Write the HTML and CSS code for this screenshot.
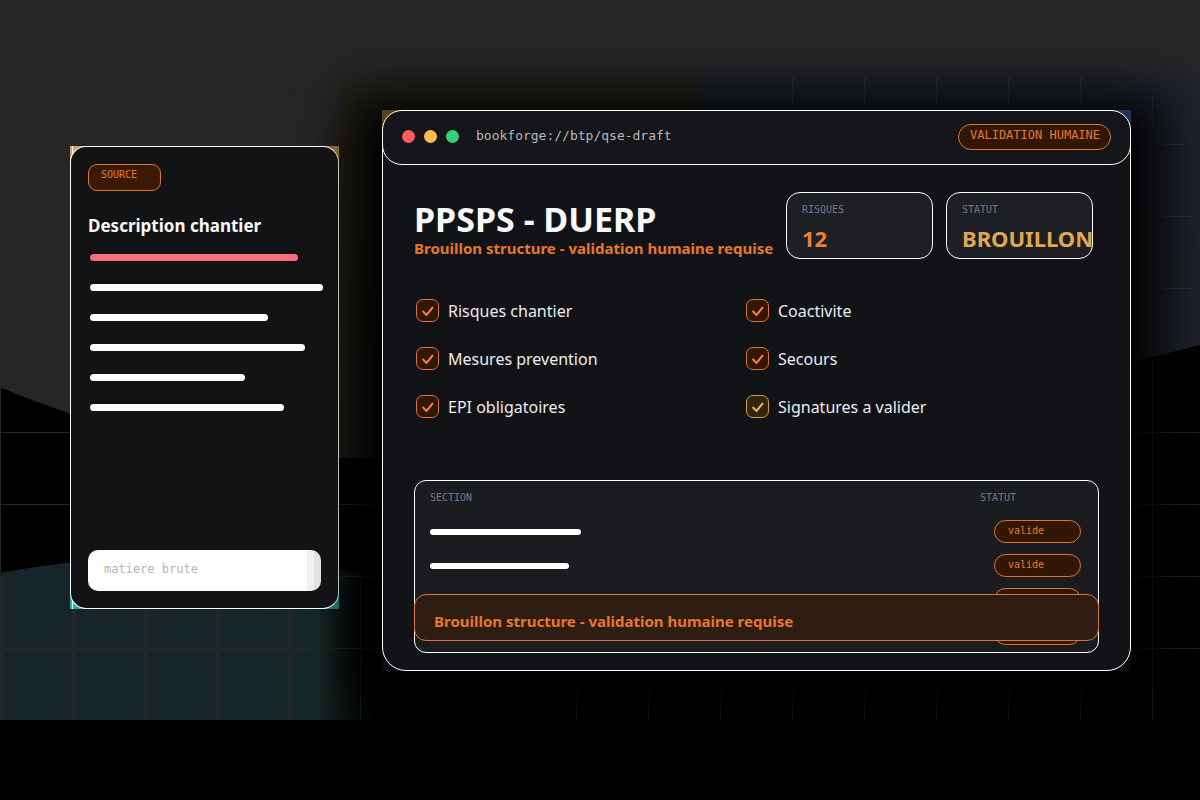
FILE: index.html
```
<!DOCTYPE html>
<html lang="fr">

<head>
  <meta charset="UTF-8">
  <title>PPSPS - DUERP</title>
  <link rel="stylesheet" href="styles.css">
</head>

<body>
  <main class="stage">
    <svg class="backdrop" viewBox="0 0 1200 720" preserveAspectRatio="xMidYMid slice" aria-hidden="true">
      <defs>
        <linearGradient id="teal">
          <stop offset="0" stop-color="#182528" />
          <stop offset=".7" stop-color="#182528" />
          <stop offset=".85" stop-color="#182a28" />
          <stop offset="1" stop-color="#182a28" stop-opacity="0" />
        </linearGradient>
        <linearGradient id="blue" x2="0" y2="1">
          <stop offset="0" stop-color="#1e2430" stop-opacity="0" />
          <stop offset=".12" stop-color="#1e2430" />
          <stop offset="1" stop-color="#20242c" />
        </linearGradient>
        <linearGradient id="brown" x2="0" y2="1">
          <stop offset="0" stop-color="#28241a" stop-opacity="0" />
          <stop offset=".12" stop-color="#28241a" />
          <stop offset="1" stop-color="#241e18" />
        </linearGradient>
        <clipPath id="top">
          <circle cx="350" cy="-442" r="900" />
        </clipPath>
        <clipPath id="right">
          <circle cx="950" cy="-520" r="900" />
        </clipPath>
      </defs>
      <path class="grid" d="M0 432.5H1200M0 504.5H1200M0 576.5H1200M0 648.5H1200M.5 360V720M360.5 576V720M576.5 576V720M648.5 576V720M720.5 576V720M792.5 576V720M864.5 576V720M936.5 576V720M1008.5 576V720M1080.5 576V720M1152.5 360V720" />
      <circle class="halo" cx="350" cy="-442" r="900" />
      <circle class="halo" cx="950" cy="-520" r="900" />
      <rect x="340" y="60" width="360" height="400" fill="url(#brown)" clip-path="url(#top)" />
      <rect x="700" y="60" width="500" height="330" fill="url(#blue)" clip-path="url(#right)" />
      <path class="grid-faint" d="M792.5 76V120M864.5 76V120M936.500 76V120M1008.5 76V120M1080.5 76V120M1152.5 96V130M1160 144.5H1184M1160 216.5H1192M1160 288.5H1192" />
      <path d="M0 573Q170 540 375 576V720H0Z" fill="url(#teal)" />
      <path class="grid-teal" d="M2 576V720M74 576V720M146 576V720M218 576V720M290 576V720M0 650H320" />
    </svg>

    <section class="frame source-frame">
      <div class="source">
        <span class="tag">SOURCE</span>
        <h2>Description chantier</h2>
        <div class="lines">
          <i class="line l1"></i>
          <i class="line l2"></i>
          <i class="line l3"></i>
          <i class="line l4"></i>
          <i class="line l5"></i>
          <i class="line l6"></i>
        </div>
        <input class="raw" type="text" placeholder="matiere brute" aria-label="matiere brute">
      </div>
    </section>

    <section class="frame app-frame">
      <div class="app">
        <header class="bar">
          <i class="dot red"></i>
          <i class="dot yellow"></i>
          <i class="dot green"></i>
          <span class="url">bookforge://btp/qse-draft</span>
          <span class="pill human">VALIDATION HUMAINE</span>
        </header>

        <div class="content">
          <div class="top">
            <div class="heading">
              <h1>PPSPS - DUERP</h1>
              <p class="notice">Brouillon structure - validation humaine requise</p>
            </div>
            <div class="stat">
              <span class="label">RISQUES</span>
              <strong>12</strong>
            </div>
            <div class="stat gold">
              <span class="label">STATUT</span>
              <strong>BROUILLON</strong>
            </div>
          </div>

          <div class="checks">
            <label class="check"><span class="box"><input type="checkbox" checked><svg viewBox="0 0 23 23"><path d="M6.500 12L10.500 16L17 8" /></svg></span>Risques chantier</label>
            <label class="check"><span class="box"><input type="checkbox" checked><svg viewBox="0 0 23 23"><path d="M6.500 12L10.500 16L17 8" /></svg></span>Coactivite</label>
            <label class="check"><span class="box"><input type="checkbox" checked><svg viewBox="0 0 23 23"><path d="M6.500 12L10.500 16L17 8" /></svg></span>Mesures prevention</label>
            <label class="check"><span class="box"><input type="checkbox" checked><svg viewBox="0 0 23 23"><path d="M6.500 12L10.500 16L17 8" /></svg></span>Secours</label>
            <label class="check"><span class="box"><input type="checkbox" checked><svg viewBox="0 0 23 23"><path d="M6.500 12L10.500 16L17 8" /></svg></span>EPI obligatoires</label>
            <label class="check gold"><span class="box"><input type="checkbox" checked><svg viewBox="0 0 23 23"><path d="M6.500 12L10.500 16L17 8" /></svg></span>Signatures a valider</label>
          </div>

          <div class="panel">
            <table>
              <thead>
                <tr>
                  <th>SECTION</th>
                  <th class="status">STATUT</th>
                </tr>
              </thead>
              <tbody>
                <tr>
                  <td><i class="line s1"></i></td>
                  <td class="status"><span class="pill">valide</span></td>
                </tr>
                <tr>
                  <td><i class="line s2"></i></td>
                  <td class="status"><span class="pill">valide</span></td>
                </tr>
                <tr>
                  <td></td>
                  <td class="status"><span class="pill"></span></td>
                </tr>
                <tr>
                  <td></td>
                  <td class="status"><span class="pill"></span></td>
                </tr>
              </tbody>
            </table>
            <p class="notice banner">Brouillon structure - validation humaine requise</p>
          </div>
        </div>
      </div>
    </section>
  </main>
</body>

</html>
```
FILE: styles.css
```
* {
  box-sizing: border-box;
}
body {
  margin: 0;
  background: #000;
  color: #f8f8f9;
  font-family: "Noto Sans", "Open Sans", sans-serif;
}
h1, h2, p {
  margin: 0;
}
.stage {
  position: relative;
  display: grid;
  grid-template-columns: 269fr 749fr;
  gap: 43px;
  align-items: start;
  min-height: 720px;
  padding: 110px 69px 49px 70px;
  overflow: hidden;
}

/* backdrop */
.backdrop {
  position: absolute;
  top: 0;
  left: 0;
  width: 100%;
  height: 100%;
}
.grid {
  fill: none;
  stroke: #262626;
}
.grid-faint {
  fill: none;
  stroke: #30333a;
}
.halo {
  fill: #262628;
}
.grid-teal {
  fill: none;
  stroke: #202829;
  stroke-width: 4;
}

/* panels */
.frame {
  position: relative;
  min-width: 0;
}
.source-frame {
  z-index: 1;
  margin-top: 36px;
  background:
    linear-gradient(#fff, #fff) 2px 0 / 1px 100% no-repeat,
    linear-gradient(90deg, transparent 50%, rgba(0, 0, 0, 0.4)),
    linear-gradient(#dca552 50%, #20b4a4 50%);
}
.app-frame {
  background:
    linear-gradient(transparent 50%, #080c0e 50%),
    linear-gradient(90deg, #5a4018 50%, #1f3352 50%);
  box-shadow: 0 18px 50px 32px #000;
}
.source {
  display: flex;
  flex-direction: column;
  align-items: flex-start;
  min-height: 463px;
  padding: 17px;
  background: #121315;
  border: 1px solid #fff;
  border-right-color: #bdbdb8;
  border-radius: 16px;
}
.tag {
  width: 73px;
  height: 27px;
  padding-left: 12px;
  border: 1px solid #d9773a;
  border-radius: 9px;
  background: #3a1a05;
  color: #e37a30;
  font: 10px/20px "DejaVu Sans Mono", monospace;
}
h2 {
  margin-top: 22px;
  font-size: 17px;
  line-height: 26px;
  white-space: nowrap;
}
.lines {
  display: grid;
  gap: 23px;
  width: 100%;
  margin-top: 15px;
  padding-left: 2px;
}
.line {
  display: block;
  height: 7px;
  border-radius: 4px;
  background: #fff;
}
.l1 {
  width: 90%;
  background: #fb6b78;
}
.l2 {
  width: 101%;
}
.l3 {
  width: 77%;
}
.l4 {
  width: 93%;
}
.l5 {
  width: 67%;
}
.l6 {
  width: 84%;
}
.raw {
  width: 100%;
  height: 41px;
  margin-top: auto;
  padding: 0 16px 3px;
  border: 0;
  border-radius: 10px;
  background: linear-gradient(90deg, #fff 94%, #f0f0f0 94%, #f0f0f0 97%, #e2e2e2 97%);
  font: 12px "DejaVu Sans Mono", monospace;
}
.raw::placeholder {
  color: #b4b4b4;
  opacity: 1;
}

/* app window */
.app {
  background: #121316;
  border: 1px solid #fff;
  border-radius: 24px;
}
.bar {
  display: flex;
  align-items: center;
  gap: 9px;
  height: 55px;
  margin: -1px;
  padding: 0 19px 2px;
  border: 1px solid #fff;
  border-radius: 20px;
  background: #151619;
}
.dot {
  width: 13px;
  height: 13px;
  border-radius: 50%;
}
.red {
  background: #fb5a60;
}
.yellow {
  background: #fdbc4e;
}
.green {
  background: #35d07a;
}
.url {
  margin-left: 8px;
  padding-bottom: 2px;
  color: #b9b9bd;
  font: 13px/16px "DejaVu Sans Mono", monospace;
}
.pill {
  display: block;
  width: 87px;
  height: 23px;
  padding-left: 13px;
  border: 1px solid #d9773a;
  border-radius: 12px;
  background: #331704;
  color: #e37a30;
  font: 10px/20px "DejaVu Sans Mono", monospace;
}
.human {
  width: 153px;
  height: 26px;
  margin-left: auto;
  padding-left: 11px;
  border-radius: 13px;
  font-size: 12px;
  white-space: nowrap;
}
.content {
  padding: 28px 31px 17px;
}
.top {
  display: flex;
  gap: 13px;
  padding-right: 6px;
}
.heading {
  flex: 1;
  min-width: 0;
  padding-top: 9px;
  white-space: nowrap;
}
h1 {
  font-size: 34px;
  line-height: 37px;
}
.notice {
  color: #e8772e;
  font-size: 15px;
  font-weight: 700;
  line-height: 20px;
}
.stat {
  width: 147px;
  height: 67px;
  padding: 10px 15px 0;
  border: 1px solid #fff;
  border-radius: 14px;
  background: #1e1f24;
  color: #ef8030;
}
.stat strong {
  display: block;
  margin-top: 6px;
  font-size: 22px;
  line-height: 30px;
}
.stat.gold {
  color: #e0a850;
}
.label, th {
  color: #77777d;
  font: 10px/14px "DejaVu Sans Mono", monospace;
  text-align: left;
}
.label {
  display: block;
}
.checks {
  display: grid;
  grid-template-columns: 330fr 353fr;
  row-gap: 23px;
  margin-top: 40px;
  padding-left: 2px;
}
.check {
  display: flex;
  align-items: flex-start;
  gap: 9px;
  height: 25px;
  font-size: 16px;
  line-height: 25px;
  color: #ececee;
}
.box {
  display: grid;
  color: #ef8040;
}
.box input, .box svg {
  grid-area: 1 / 1;
  width: 23px;
  height: 23px;
  margin: 0;
}
.box input {
  appearance: none;
  border: 1px solid #d9773a;
  border-radius: 7px;
  background: #331704;
}
.box svg {
  position: relative;
  fill: none;
  stroke: currentColor;
  stroke-width: 2;
  pointer-events: none;
}
.gold .box {
  color: #e0b060;
}
.gold .box input {
  border-color: #d0a050;
  background: #33240c;
}

/* sections table */
.panel {
  position: relative;
  margin-top: 60px;
  padding-bottom: 1px;
  border: 1px solid #fff;
  border-radius: 12px;
  background: #1b1c1f;
}
table {
  width: 100%;
  border-collapse: collapse;
  table-layout: fixed;
}
tr {
  height: 34px;
}
th, td {
  padding: 0 0 0 15px;
}
td .line {
  height: 6px;
}
.s1 {
  width: 151px;
}
.s2 {
  width: 139px;
}
th.status {
  width: 118px;
  padding-left: 0;
}
td.status {
  padding: 0 0 1px 14px;
}
.banner {
  position: absolute;
  right: -1px;
  bottom: 11px;
  left: -1px;
  padding: 16px 19px 9px;
  border: 1px solid #d9773a;
  border-radius: 12px;
  background: #2f1c13;
}
```
